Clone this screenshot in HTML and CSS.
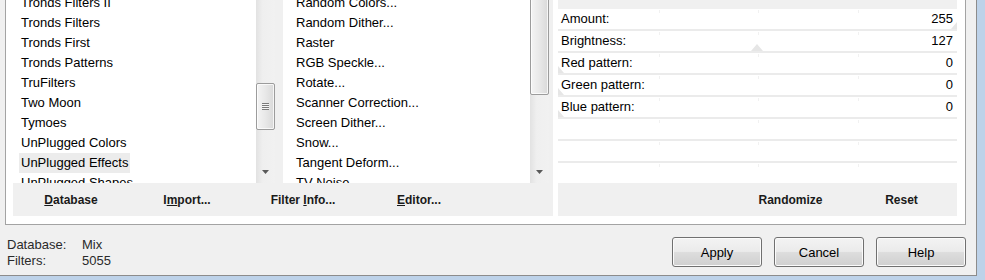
FILE: index.html
```html
<!DOCTYPE html>
<html>
<head>
<meta charset="utf-8">
<link rel="stylesheet" href="styles.css">
</head>
<body>
<div class="window">
  <div class="group">
    <div class="browser">
      <div class="lists">
        <div class="list list-cats">
          <ul class="items">
            <li class="item">Tronds Filters II</li>
            <li class="item">Tronds Filters</li>
            <li class="item">Tronds First</li>
            <li class="item">Tronds Patterns</li>
            <li class="item">TruFilters</li>
            <li class="item">Two Moon</li>
            <li class="item">Tymoes</li>
            <li class="item">UnPlugged Colors</li>
            <li class="item selected">UnPlugged Effects</li>
            <li class="item">UnPlugged Shapes</li>
          </ul>
          <div class="scroll">
            <div class="track">
              <div class="thumb"><div class="grip"></div></div>
              <div class="arrow"><svg width="7" height="4" viewBox="0 0 7 4"><polygon points="0,0 7,0 3.5,4" fill="#5a5a5a"/></svg></div>
            </div>
          </div>
        </div>
        <div class="list list-filters">
          <ul class="items">
            <li class="item">Random Colors...</li>
            <li class="item">Random Dither...</li>
            <li class="item">Raster</li>
            <li class="item">RGB Speckle...</li>
            <li class="item">Rotate...</li>
            <li class="item">Scanner Correction...</li>
            <li class="item">Screen Dither...</li>
            <li class="item">Snow...</li>
            <li class="item">Tangent Deform...</li>
            <li class="item">TV Noise...</li>
          </ul>
          <div class="scroll">
            <div class="track">
              <div class="thumb"></div>
              <div class="arrow"><svg width="7" height="4" viewBox="0 0 7 4"><polygon points="0,0 7,0 3.5,4" fill="#5a5a5a"/></svg></div>
            </div>
          </div>
        </div>
      </div>
      <div class="toolbar">
        <span class="tbtn"><u>D</u>atabase</span>
        <span class="tbtn">I<u>m</u>port...</span>
        <span class="tbtn">Filter <u>I</u>nfo...</span>
        <span class="tbtn"><u>E</u>ditor...</span>
      </div>
    </div>
    <div class="params">
      <div class="phead"></div>
      <div class="prow"><span>Amount:</span><span>255</span><i class="marker" style="left:100%"></i></div>
      <div class="prow"><span>Brightness:</span><span>127</span><i class="marker" style="left:49.8%"></i></div>
      <div class="prow"><span>Red pattern:</span><span>0</span><i class="marker" style="left:0%"></i></div>
      <div class="prow"><span>Green pattern:</span><span>0</span><i class="marker" style="left:0%"></i></div>
      <div class="prow"><span>Blue pattern:</span><span>0</span><i class="marker" style="left:0%"></i></div>
      <div class="prow empty"></div>
      <div class="prow empty"></div>
      <div class="prow empty last"></div>
      <div class="ptools">
        <span class="tbtn pbtn">Randomize</span>
        <span class="tbtn pbtn">Reset</span>
      </div>
    </div>
  </div>
  <div class="footer">
    <div class="status">
      <span>Database:</span><span>Mix</span>
      <span>Filters:</span><span>5055</span>
    </div>
    <div class="actions">
      <button class="btn">Apply</button>
      <button class="btn">Cancel</button>
      <button class="btn">Help</button>
    </div>
  </div>
</div>
</body>
</html>
```

FILE: styles.css
```css
html, body {
  margin: 0;
  padding: 0;
}
body {
  width: 985px;
  height: 280px;
  overflow: hidden;
  background: #bdd2e9;
  font-family: "Liberation Sans", Arial, sans-serif;
  color: #000;
}
.window {
  width: 976px;
  height: 275px;
  background: #f0f0f0;
  border-right: 1px solid #8c8c8c;
  border-bottom: 1px solid #8c8c8c;
  display: flex;
  flex-direction: column;
}
.group {
  margin-left: 5px;
  width: 944px;
  padding: 0 8px 8px 7px;
  border: 1px solid #a3a3a3;
  border-top: none;
  background: #fff;
  display: flex;
}
.browser {
  width: 540px;
  display: flex;
  flex-direction: column;
}
.lists {
  display: flex;
  height: 183px;
}
.list {
  width: 270px;
  height: 183px;
  display: flex;
  overflow: hidden;
}
.items {
  flex: 1;
  list-style: none;
  margin: -7px 0 0;
  padding: 0;
  background: #fff;
  display: flex;
  flex-direction: column;
  align-items: flex-start;
}
.item {
  height: 20px;
  line-height: 20px;
  font-size: 13px;
  white-space: nowrap;
  padding: 0 2px;
}
.list-cats .item { margin-left: 6px; }
.list-filters .item { margin-left: 11px; }
.item.selected { background: #ececec; }

.scroll {
  display: flex;
  background: #f0f0f0;
}
.list-cats .scroll { padding-right: 8px; }
.list-filters .scroll { padding-right: 4px; }
.track {
  width: 19px;
  display: flex;
  flex-direction: column;
  background: linear-gradient(to right, #e2e2e2, #efefef 35%, #f1f1f1);
}
.thumb {
  box-sizing: border-box;
  width: 19px;
  border: 1px solid #9c9c9c;
  border-radius: 2px;
  background: linear-gradient(to right, #f4f4f4, #e8e8e8 50%, #d9d9d9);
  box-shadow: inset 0 0 0 1px rgba(255,255,255,0.75);
  display: flex;
  align-items: center;
  justify-content: center;
}
.list-cats .thumb { margin-top: 83px; height: 47px; }
.list-filters .thumb { margin-top: -12px; height: 107px; }
.grip {
  width: 7px;
  height: 7px;
  background: repeating-linear-gradient(#7a7a7a 0 1px, #f4f4f4 1px 2px);
}
.arrow {
  margin-top: auto;
  height: 23px;
  display: flex;
  align-items: center;
  justify-content: center;
}
.arrow svg { display: block; }

.toolbar {
  height: 33px;
  background: #f0f0f0;
  display: flex;
}
.tbtn {
  width: 116px;
  text-align: center;
  font-size: 12px;
  font-weight: bold;
  line-height: 35px;
  color: #1a1a1a;
}
.tbtn u { text-decoration: underline; text-underline-offset: 1px; }

.params {
  width: 399px;
  margin-left: 5px;
  display: flex;
  flex-direction: column;
}
.phead {
  height: 9px;
  background: #f0f0f0;
}
.prow {
  position: relative;
  overflow: hidden;
  height: 16px;
  padding: 2px 4px 2px 3px;
  border-bottom: 2px solid #ebebeb;
  display: flex;
  justify-content: space-between;
  font-size: 13px;
  line-height: 16px;
  background-image:
    linear-gradient(#f1f1f1, #f1f1f1),
    linear-gradient(#f1f1f1, #f1f1f1),
    linear-gradient(#f1f1f1, #f1f1f1);
  background-size: 1px 3px;
  background-repeat: no-repeat;
  background-position: 25.5% 1px, 50.2% 1px, 75.3% 1px;
}
.prow span { position: relative; z-index: 1; }
.prow.last { border-bottom: none; }
.marker {
  position: absolute;
  bottom: 0;
  width: 0;
  height: 0;
  border-left: 6px solid transparent;
  border-right: 6px solid transparent;
  border-bottom: 7px solid #e6e6e6;
  transform: translateX(-50%);
}
.ptools {
  height: 33px;
  background: #f0f0f0;
  display: flex;
  justify-content: flex-end;
}
.pbtn { width: 111px; }

.footer {
  display: flex;
  padding-top: 12px;
}
.status {
  padding-left: 7px;
  display: grid;
  grid-template-columns: 75px auto;
  font-size: 13px;
  line-height: 16px;
  color: #2a2a2a;
}
.actions {
  margin-left: auto;
  padding-right: 10px;
  display: flex;
  gap: 12px;
}
.btn {
  box-sizing: border-box;
  width: 90px;
  height: 30px;
  margin: 0;
  padding: 0;
  border: 1px solid #707070;
  border-radius: 3px;
  background: linear-gradient(#f3f3f3 0%, #ebebeb 48%, #dddddd 52%, #cfcfcf 100%);
  box-shadow: inset 0 0 0 1px #fbfbfb;
  font-family: "Liberation Sans", Arial, sans-serif;
  font-size: 13px;
  color: #000;
}
```
